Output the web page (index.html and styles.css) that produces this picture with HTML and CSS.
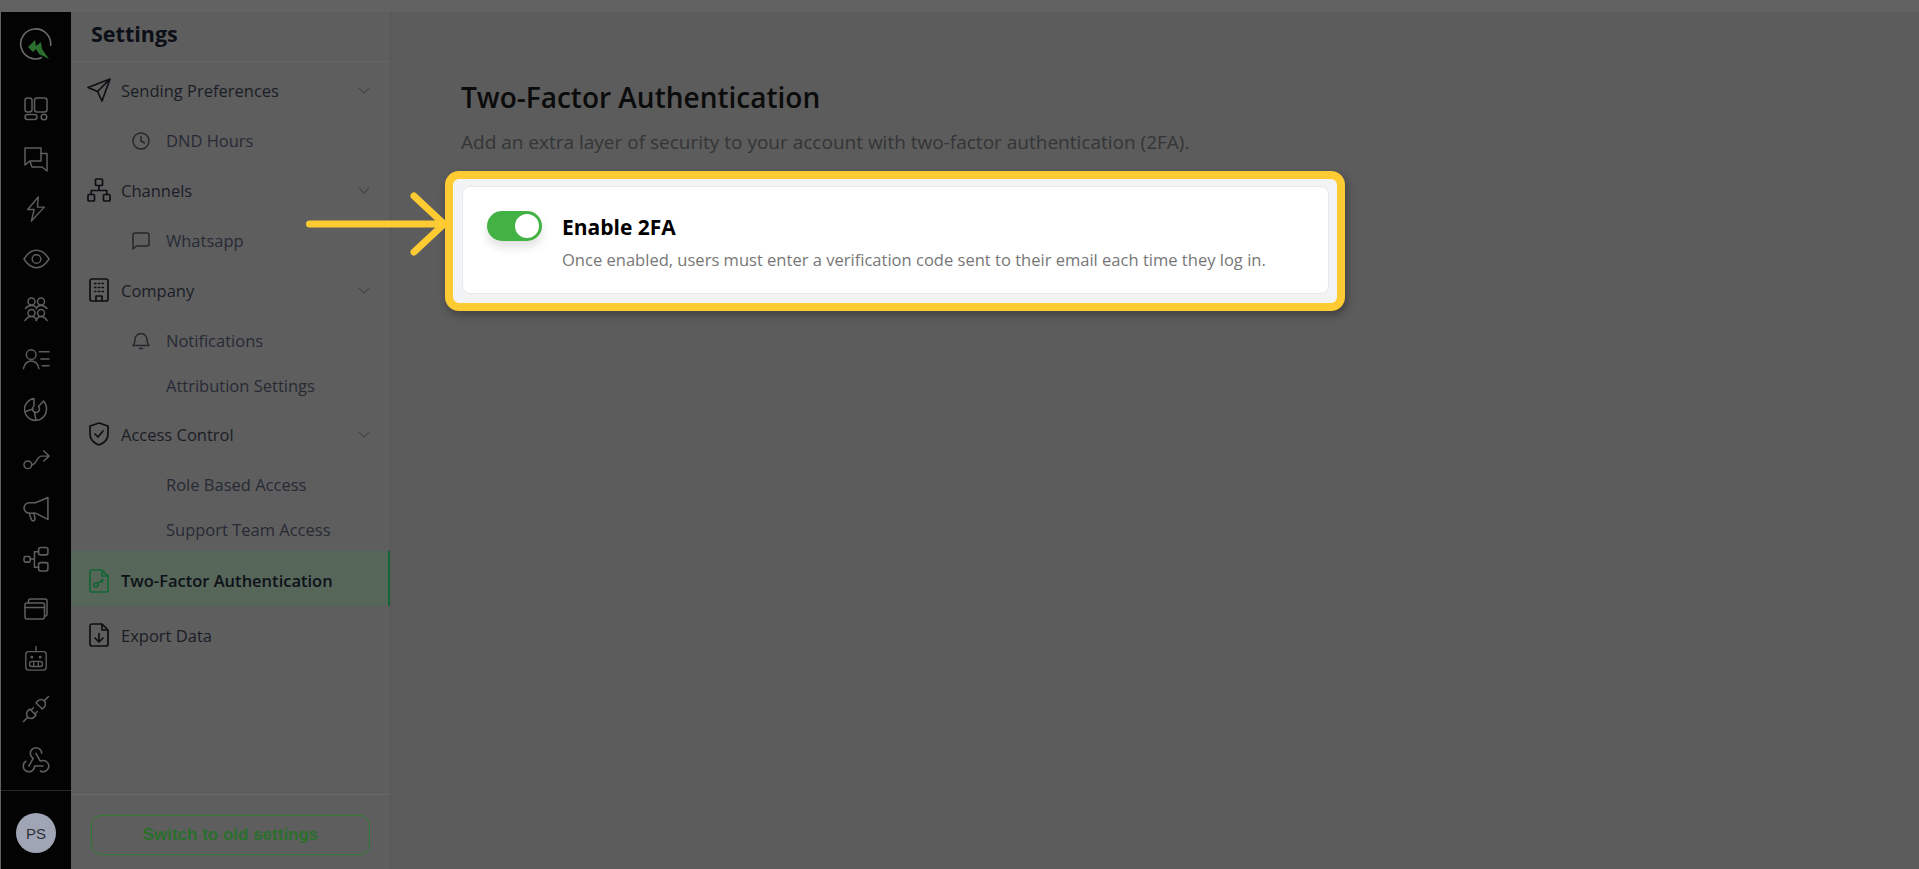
FILE: index.html
```html
<!DOCTYPE html>
<html lang="en">
<head>
    <meta charset="UTF-8">
    <title>Two-Factor Authentication</title>
    <link rel="stylesheet" href="styles.css">
</head>
<body>

<div class="app">

    <!-- icon rail -->
    <aside class="rail">
        <div class="rail-logo">
            <svg width="34" height="34" viewBox="0 0 34 34" fill="none">
                <path class="logo-ring" d="M23 30.500A15 15 0 1 1 31.500 19"/>
                <path class="logo-bolt" d="M9 20l7-7 1 6 5-4 1 7 7 10-10-5-3-5-3 3z"/>
            </svg>
        </div>
        <nav class="rail-nav">
            <a class="rail-item"><svg viewBox="0 0 24 24"><rect x="1" y="1" width="7" height="14" rx="2.5"/><rect x="10.5" y="1" width="12.5" height="14" rx="2.5"/><rect x="1" y="17.5" width="12" height="5" rx="2.5"/><circle cx="20" cy="20" r="2.8"/></svg></a>
            <a class="rail-item"><svg viewBox="0 0 24 24"><path d="M1 1h16v13H6l-5 4z"/><path d="M17 6.500h6V24l-5-4H8l-2-5.500"/></svg></a>
            <a class="rail-item"><svg viewBox="0 0 24 28"><path d="M14.500 1L3 14.500h7L7 27l14-15h-7.500z"/></svg></a>
            <a class="rail-item"><svg viewBox="0 0 28 24" class="wide"><path d="M1 12C5 5.500 9 3 14 3s9 2.500 13 9c-4 6.500-8 9-13 9s-9-2.500-13-9z"/><circle cx="14" cy="12" r="4.500"/></svg></a>
            <a class="rail-item"><svg viewBox="0 0 24 24"><circle cx="7.500" cy="4.500" r="3.500"/><circle cx="17" cy="4.500" r="3.500"/><path d="M1.500 11.500c1.500-2 3.500-3 6-3s4.500 1 5 3M12 11.500c1-2 2.500-3 5-3s4.500 1 6 3"/><circle cx="7.500" cy="16" r="3.500"/><circle cx="17" cy="16" r="3.500"/><path d="M1 23.500c1.500-2.500 3.500-4 6.500-4s4.500 1.500 5 4M12 23.500c1-2.500 2.500-4 5-4s4.500 1.500 6 4"/></svg></a>
            <a class="rail-item"><svg viewBox="0 0 28 24" class="wide"><circle cx="8.500" cy="7.500" r="5"/><path d="M0.500 22c1-5 4-8 8-8s7 3 8 8M17 4.500h10M18.500 12h8.500M20 19h7"/></svg></a>
            <a class="rail-item"><svg viewBox="0 0 24 24"><path d="M10 1.500A11 11 0 1 0 22.500 12c0-3-1-6-3-8l-5 5.500a3.500 3.500 0 1 1-4.500-.5z"/><path d="M1.500 14.500l7.500-2.500M10.500 15.500L12 23"/></svg></a>
            <a class="rail-item"><svg viewBox="0 0 28 24" class="wide"><circle cx="5" cy="18" r="4"/><path d="M9 18c5 0 5-8 9.500-9h8M21.500 3.500l5.500 5.500-5.500 5"/></svg></a>
            <a class="rail-item"><svg viewBox="0 0 26 24" class="wide"><path d="M24 1v21l-12-6H6a5 5 0 0 1 0-10h6z"/><path d="M6 16l2 6a1.800 1.800 0 0 0 3.500-1l-1-5"/></svg></a>
            <a class="rail-item"><svg viewBox="0 0 26 24" class="wide"><rect x="1" y="9.500" width="6" height="5.500" rx="1.500"/><rect x="15" y="1" width="9" height="7" rx="2"/><rect x="15" y="15.500" width="9" height="8" rx="2"/><path d="M7 12h4M11 5v15M11 5h4M11 20h4"/></svg></a>
            <a class="rail-item"><svg viewBox="0 0 24 22"><rect x="1" y="5" width="19.500" height="16" rx="2"/><path d="M1 9.500h19.500M4.500 5V3a2 2 0 0 1 2-2H21a2 2 0 0 1 2 2v13a2 2 0 0 1-2 2h-.5"/></svg></a>
            <a class="rail-item"><svg viewBox="0 0 24 28"><rect x="1" y="6" width="22" height="20" rx="3"/><path d="M12 0v6"/><circle cx="7.500" cy="12" r=".8"/><circle cx="16.500" cy="12" r=".8"/><rect x="5" y="16.500" width="14" height="5.500" rx="2.700"/><path d="M9.500 16.500v5.500M14.500 16.500v5.500"/></svg></a>
            <a class="rail-item"><svg viewBox="0 0 24 24" class="plug"><path d="M7 12l5 5-1.500 1.500a3.536 3.536 0 1 1-5-5z"/><path d="M17 12l-5-5 1.500-1.500a3.536 3.536 0 1 1 5 5z"/><path d="M2 22l3.500-3.500M18.500 5.500L22 2M10 11l-2 2M13 14l-2 2"/></svg></a>
            <a class="rail-item"><svg viewBox="0 0 24 24" class="hook"><path d="M4.876 13.610a4 4 0 1 0 6.124 3.390h6"/><path d="M15.066 20.502a4 4 0 1 0 1.934-7.502c-.706 0-1.424.179-2 .5l-3-5.500"/><path d="M16 8a4 4 0 1 0-8 0c0 1.506.77 2.818 2 3.500l-3 5.500"/></svg></a>
        </nav>
        <div class="rail-foot">
            <div class="avatar">PS</div>
        </div>
    </aside>

    <!-- settings menu -->
    <aside class="side">
        <div class="side-head">Settings</div>
        <nav class="side-nav">
            <a class="row">
                <svg class="ico" viewBox="0 0 24 24"><path d="M23 1L1 9.500l9.500 4 4.500 9.500zM23 1L10.500 13.500"/></svg>
                <span>Sending Preferences</span>
                <svg class="chev" viewBox="0 0 12 7"><path d="M1 1l5 5 5-5"/></svg>
            </a>
            <div class="group group-first">
                <a class="sub">
                    <svg class="sub-ico" viewBox="0 0 18 18"><circle cx="9" cy="9" r="8"/><path d="M9 4.500V9l3.500 2"/></svg>
                    <span>DND Hours</span>
                </a>
            </div>
            <a class="row">
                <svg class="ico" viewBox="0 0 24 24"><rect x="8.500" y="1" width="7" height="6.500" rx="1"/><rect x="1" y="16.500" width="6.500" height="6.500" rx="1"/><rect x="16.500" y="16.500" width="6.500" height="6.500" rx="1"/><path d="M12 7.500v5M4.200 16.500v-4h15.600v4"/></svg>
                <span>Channels</span>
                <svg class="chev" viewBox="0 0 12 7"><path d="M1 1l5 5 5-5"/></svg>
            </a>
            <div class="group group-first">
                <a class="sub">
                    <svg class="sub-ico" viewBox="0 0 18 18"><path d="M1 3a2 2 0 0 1 2-2h12a2 2 0 0 1 2 2v9a2 2 0 0 1-2 2H4.500L1 17z"/></svg>
                    <span>Whatsapp</span>
                </a>
            </div>
            <a class="row">
                <svg class="ico" viewBox="0 0 24 24"><rect x="3" y="1" width="18" height="22" rx="2"/><path class="dots" d="M7.500 5.500h1.500M11.300 5.500h1.500M15 5.500h1.500M7.500 9.500h1.500M11.300 9.500h1.500M15 9.500h1.500M7.500 13.500h1.500M11.300 13.500h1.500M15 13.500h1.500"/><path d="M9 23v-5h6v5"/></svg>
                <span>Company</span>
                <svg class="chev" viewBox="0 0 12 7"><path d="M1 1l5 5 5-5"/></svg>
            </a>
            <div class="group group-wide">
                <a class="sub">
                    <svg class="sub-ico" viewBox="0 0 18 18"><path d="M1 13.500c1.500-1.500 2-3 2-6a6 6 0 0 1 12 0c0 3 .5 4.500 2 6zM7.500 16.500h3"/></svg>
                    <span>Notifications</span>
                </a>
                <a class="sub"><span>Attribution Settings</span></a>
            </div>
            <a class="row">
                <svg class="ico" viewBox="0 0 24 24"><path d="M12 1l9 3v8c0 5-3.500 9-9 11-5.500-2-9-6-9-11V4z"/><path d="M8 12l3 3 5-6"/></svg>
                <span>Access Control</span>
                <svg class="chev" viewBox="0 0 12 7"><path d="M1 1l5 5 5-5"/></svg>
            </a>
            <div class="group group-last">
                <a class="sub"><span>Role Based Access</span></a>
                <a class="sub"><span>Support Team Access</span></a>
            </div>
            <a class="row active">
                <svg class="ico" viewBox="0 0 24 24"><path d="M5 1h10l6 6v14a2 2 0 0 1-2 2H5a2 2 0 0 1-2-2V3a2 2 0 0 1 2-2zM15 1v6h6"/><circle cx="9" cy="16" r="2"/><path d="M10.500 14.500L16 10.500M14 12l1.500 1.500"/></svg>
                <span>Two-Factor Authentication</span>
            </a>
            <a class="row row-tall">
                <svg class="ico" viewBox="0 0 24 24"><path d="M5 1h10l6 6v14a2 2 0 0 1-2 2H5a2 2 0 0 1-2-2V3a2 2 0 0 1 2-2zM15 1v6h6"/><path d="M12 10.500v8M8 15l4 4 4-4"/></svg>
                <span>Export Data</span>
            </a>
        </nav>
        <div class="side-foot">
            <button class="old-btn">Switch to old settings</button>
        </div>
    </aside>

    <!-- page content -->
    <main class="main">
        <h1>Two-Factor Authentication</h1>
        <p class="lead">Add an extra layer of security to your account with two-factor authentication (2FA).</p>

        <div class="highlight">
            <div class="card">
                <div class="toggle"><div class="knob"></div></div>
                <div class="card-text">
                    <div class="card-title">Enable 2FA</div>
                    <div class="card-desc">Once enabled, users must enter a verification code sent to their email each time they log in.</div>
                </div>
            </div>
        </div>

        <!-- callout arrow -->
        <svg class="arrow" width="142" height="64" viewBox="0 0 142 64"><path d="M3.500 32h133M108 4l30 28-30 28"/></svg>
    </main>
</div>

</body>
</html>
```

FILE: styles.css
```css
* {
    box-sizing: border-box;
}
html, body {
    height: 100%;
    overflow: hidden;
}
body {
    margin: 0;
    padding: 12px 0 0 1px;
    background-color: #626262;
    font-family: "Open Sans", "Noto Sans", sans-serif;
}
.app {
    display: flex;
    height: 857px;
}

/* icon rail */
.rail {
    width: 70px;
    flex-shrink: 0;
    background-color: #030303;
    display: flex;
    flex-direction: column;
}
.rail-logo {
    height: 72px;
    padding-top: 15px;
    display: flex;
    justify-content: center;
    align-items: flex-start;
}
.logo-ring {
    stroke: #6a6a6a;
    stroke-width: 1.6;
}
.logo-bolt {
    fill: #2c6e2e;
}
.rail-nav {
    display: flex;
    flex-direction: column;
}
.rail-item {
    height: 50px;
    display: flex;
    align-items: center;
    justify-content: center;
}
.rail-item svg {
    width: 24px;
    height: 26px;
    fill: none;
    stroke: #5f5f5f;
    stroke-width: 1.5;
    stroke-linecap: round;
    stroke-linejoin: round;
}
.rail-item svg.wide {
    width: 27px;
}
.rail-item svg.plug {
    width: 30px;
    height: 30px;
    stroke-width: 1.2;
}
.rail-item svg.hook {
    width: 34px;
    height: 34px;
    stroke-width: 1.1;
}
.rail-foot {
    margin-top: auto;
    height: 79px;
    border-top: 1px solid #2a2a2a;
    display: flex;
    justify-content: center;
    padding-top: 22px;
}
.avatar {
    width: 40px;
    height: 40px;
    border-radius: 50%;
    background-color: #a0a5b6;
    color: #2e2e33;
    font-family: "Liberation Sans", Arial, sans-serif;
    font-size: 15px;
    display: flex;
    align-items: center;
    justify-content: center;
}

/* settings menu */
.side {
    width: 320px;
    flex-shrink: 0;
    background-color: #5e5e5e;
    border-right: 1px solid #565656;
    display: flex;
    flex-direction: column;
}
.side-head {
    height: 50px;
    padding-left: 20px;
    border-bottom: 1px solid #666;
    color: #0c0f17;
    font-size: 21.5px;
    font-weight: 700;
    line-height: 44px;
}
.side-nav {
    flex: 1;
    padding-top: 3px;
}
.row {
    height: 50px;
    padding: 0 20px 0 16px;
    display: flex;
    align-items: center;
    color: #1a1d26;
    font-size: 16.5px;
}
.row .ico {
    width: 24px;
    height: 24px;
    margin-right: 10px;
    flex-shrink: 0;
}
.ico, .sub-ico, .chev {
    fill: none;
    stroke: #0e0f12;
    stroke-width: 1.7;
    stroke-linecap: round;
    stroke-linejoin: round;
}
.ico .dots {
    stroke-width: 1.3;
}
.chev {
    width: 12px;
    height: 7px;
    margin-left: auto;
    stroke: #46464a;
    stroke-width: 1.2;
}
.group {
    padding: 3px 0;
}
.group-first {
    padding: 3px 0 2px;
}
.group-wide {
    padding: 3px 0 1px;
}
.group-last {
    padding: 3px 0 0;
    margin-bottom: -1px;
}
.sub {
    height: 45px;
    padding-left: 95px;
    position: relative;
    display: flex;
    align-items: center;
    color: #272a35;
    font-size: 16.5px;
}
.sub-ico {
    position: absolute;
    left: 61px;
    width: 18px;
    height: 18px;
    stroke: #26272c;
    stroke-width: 1.5;
}
.row.active {
    height: 55px;
    padding-top: 4px;
    background-color: #566659;
    border-right: 2px solid #146636;
    color: #0e1119;
    font-weight: 600;
}
.row.active .ico {
    stroke: #146636;
}
.row-tall {
    height: 58px;
}
.side-foot {
    height: 75px;
    border-top: 1px solid #6a6a6a;
    padding: 20px 20px 0;
}
.old-btn {
    width: 279px;
    height: 40px;
    background: none;
    border: 1px solid #2f7a30;
    border-radius: 10px;
    color: #2b6f2c;
    font-family: "Liberation Sans", Arial, sans-serif;
    font-size: 17px;
    font-weight: 700;
}

/* page content */
.main {
    flex: 1;
    background-color: #5b5c5b;
    padding: 64px 0 0 70px;
    position: relative;
}
h1 {
    margin: 0;
    color: #0b0b0b;
    font-size: 28px;
    font-weight: 600;
    line-height: 42px;
}
.lead {
    margin: 11px 0 0;
    color: #343537;
    font-size: 19px;
    line-height: 26px;
}
.highlight {
    width: 900px;
    height: 140px;
    margin: 16px 0 0 -16px;
    padding: 7px 8px 9px 9px;
    background-color: #f2f3f5;
    border: 8px solid #ffcb33;
    border-radius: 14px;
    box-shadow: 2px 4px 8px rgba(0, 0, 0, 0.3);
}
.card {
    height: 100%;
    padding-left: 24px;
    display: flex;
    align-items: center;
    gap: 20px;
    background-color: #fff;
    border: 1px solid #e8e9ed;
    border-radius: 8px;
}
.toggle {
    width: 55px;
    height: 30px;
    margin-top: -29px;
    padding: 3px;
    border-radius: 15px;
    background-color: #43b244;
    box-shadow: 0 6px 10px rgba(0, 0, 0, 0.12);
    display: flex;
    justify-content: flex-end;
}
.knob {
    width: 24px;
    height: 24px;
    border-radius: 50%;
    background-color: #fff;
}
.card-text {
    padding-top: 3px;
}
.card-title {
    color: #000;
    font-size: 21px;
    font-weight: 700;
    line-height: 28px;
}
.card-desc {
    margin-top: 8px;
    color: #777;
    font-size: 16.55px;
    line-height: 22px;
}
.arrow {
    position: absolute;
    left: -85px;
    top: 180px;
    fill: none;
    stroke: #ffcb33;
    stroke-width: 7;
    stroke-linecap: round;
    stroke-linejoin: round;
}
```
